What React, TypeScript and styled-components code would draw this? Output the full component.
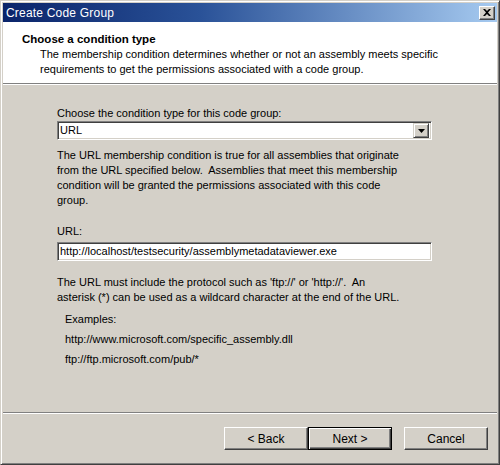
import React from "react";
import styled, { createGlobalStyle } from "styled-components";

const Global = createGlobalStyle`
  html, body { margin: 0; padding: 0; background: #d4d0c8; }
  * { box-sizing: border-box; }
`;

const Window = styled.div`
  width: 500px;
  height: 465px;
  background: #d4d0c8;
  border-top: 1px solid #d4d0c8;
  border-left: 1px solid #d4d0c8;
  border-right: 1px solid #404040;
  border-bottom: 1px solid #404040;
  box-shadow: inset 1px 1px 0 #ffffff, inset -1px -1px 0 #808080;
  padding: 2px;
  display: flex;
  flex-direction: column;
  font-family: "Liberation Sans", Arial, sans-serif;
  font-size: 11px;
  color: #000;
`;

const TitleBar = styled.div`
  height: 19px;
  display: flex;
  align-items: center;
  justify-content: space-between;
  padding: 0 2px 0 3px;
  background: linear-gradient(to right, #0a246a 0%, #2a5298 40%, #a6caf0 100%);
`;

const TitleText = styled.span`
  color: #fff;
  font-size: 12px;
  letter-spacing: 0.2px;
`;

const CloseButton = styled.div`
  width: 16px;
  height: 14px;
  background: #d4d0c8;
  border-top: 1px solid #fff;
  border-left: 1px solid #fff;
  border-right: 1px solid #404040;
  border-bottom: 1px solid #404040;
  box-shadow: inset -1px -1px 0 #808080;
  display: flex;
  align-items: center;
  justify-content: center;
`;

const Header = styled.div`
  background: #fff;
  height: 62px;
  padding: 10px 0 0 19px;
  border-bottom: 1px solid #808080;
  box-shadow: 0 1px 0 #fff;
`;

const HeaderTitle = styled.div`
  font-weight: bold;
  font-size: 11.5px;
  line-height: 15px;
`;

const HeaderDesc = styled.div`
  padding-left: 18px;
  line-height: 15px;
`;

const Body = styled.div`
  flex: 1;
  padding: 21px 0 0 54px;
  display: flex;
  flex-direction: column;
  margin-top: 1px;
`;

const Label = styled.div<{ $mt?: number }>`
  line-height: 15px;
  margin-top: ${(p) => p.$mt ?? 0}px;
`;

const Para = styled.div<{ $mt?: number }>`
  line-height: 15px;
  white-space: nowrap;
  margin-top: ${(p) => p.$mt ?? 0}px;
`;

const Sunken = styled.div<{ $mt?: number }>`
  width: 375px;
  height: 19px;
  margin-top: ${(p) => p.$mt ?? 0}px;
  background: #fff;
  border-top: 1px solid #808080;
  border-left: 1px solid #808080;
  border-right: 1px solid #fff;
  border-bottom: 1px solid #fff;
  box-shadow: inset 1px 1px 0 #404040, inset -1px -1px 0 #d4d0c8;
  display: flex;
  align-items: center;
  padding: 0 2px 0 2px;
  justify-content: space-between;
`;

const FieldText = styled.span`
  line-height: 15px;
`;

const DropButton = styled.div`
  width: 16px;
  height: 15px;
  background: #d4d0c8;
  border-top: 1px solid #d4d0c8;
  border-left: 1px solid #d4d0c8;
  border-right: 1px solid #404040;
  border-bottom: 1px solid #404040;
  box-shadow: inset 1px 1px 0 #fff, inset -1px -1px 0 #808080;
  display: flex;
  align-items: center;
  justify-content: center;
`;

const Examples = styled.div`
  padding-left: 8px;
  margin-top: 4px;
  line-height: 20px;
`;

const Separator = styled.div`
  height: 2px;
  border-top: 1px solid #808080;
  border-bottom: 1px solid #fff;
`;

const Footer = styled.div`
  height: 48px;
  display: flex;
  justify-content: flex-end;
  align-items: flex-start;
  padding: 13px 9px 0 0;
`;

const Button = styled.div<{ $default?: boolean; $ml?: number }>`
  width: 84px;
  height: 23px;
  margin-left: ${(p) => p.$ml ?? 0}px;
  display: flex;
  align-items: center;
  justify-content: center;
  background: #d4d0c8;
  font-size: 12px;
  border: 1px solid;
  border-color: ${(p) => (p.$default ? "#000" : "#fff #404040 #404040 #fff")};
  box-shadow: ${(p) =>
    p.$default
      ? "inset 1px 1px 0 #fff, inset -1px -1px 0 #404040, inset -2px -2px 0 #808080"
      : "inset -1px -1px 0 #808080"};
`;

export default function App() {
  return (
    <>
      <Global />
      <Window>
        <TitleBar>
          <TitleText>Create Code Group</TitleText>
          <CloseButton>
            <svg width="8" height="7" viewBox="0 0 8 7">
              <path d="M0 0h2l2 2 2-2h2L5 3.5 8 7H6L4 5 2 7H0l3-3.5z" fill="#000" />
            </svg>
          </CloseButton>
        </TitleBar>
        <Header>
          <HeaderTitle>Choose a condition type</HeaderTitle>
          <HeaderDesc>
            The membership condition determines whether or not an assembly meets specific
            <br />
            requirements to get the permissions associated with a code group.
          </HeaderDesc>
        </Header>
        <Body>
          <Label>Choose the condition type for this code group:</Label>
          <Sunken $mt={0}>
            <FieldText>URL</FieldText>
            <DropButton>
              <svg width="7" height="4" viewBox="0 0 7 4">
                <path d="M0 0h7L3.5 4z" fill="#000" />
              </svg>
            </DropButton>
          </Sunken>
          <Para $mt={8}>
            The URL membership condition is true for all assemblies that originate
            <br />
            from the URL specified below.&nbsp; Assemblies that meet this membership
            <br />
            condition will be granted the permissions associated with this code
            <br />
            group.
          </Para>
          <Label $mt={16}>URL:</Label>
          <Sunken $mt={3}>
            <FieldText>http://localhost/testsecurity/assemblymetadataviewer.exe</FieldText>
          </Sunken>
          <Para $mt={14}>
            The URL must include the protocol such as 'ftp://' or 'http://'.&nbsp; An
            <br />
            asterisk (*) can be used as a wildcard character at the end of the URL.
          </Para>
          <Examples>
            Examples:
            <br />
            http://www.microsoft.com/specific_assembly.dll
            <br />
            ftp://ftp.microsoft.com/pub/*
          </Examples>
        </Body>
        <Separator />
        <Footer>
          <Button>&lt; Back</Button>
          <Button $default>Next &gt;</Button>
          <Button $ml={12}>Cancel</Button>
        </Footer>
      </Window>
    </>
  );
}
